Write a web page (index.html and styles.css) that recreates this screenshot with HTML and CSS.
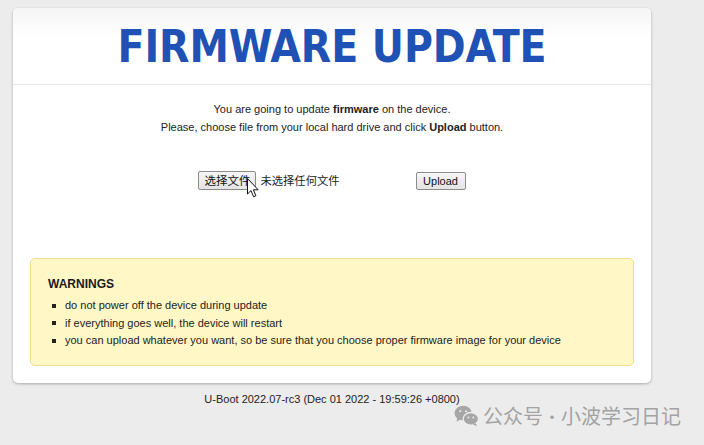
FILE: index.html
```html
<!DOCTYPE html>
<html lang="en">
<head>
<meta charset="utf-8">
<title>Firmware update</title>
<link rel="stylesheet" href="styles.css">
</head>
<body>
<div class="page">
  <div class="card">
    <div class="header">
      <h1 class="title">FIRMWARE UPDATE</h1>
    </div>
    <div class="content">
      <p class="intro">You are going to update <strong>firmware</strong> on the device.<br>Please, choose file from your local hard drive and click <strong>Upload</strong> button.</p>
      <form class="upload-form">
        <span class="file-input">
          <button type="button" class="btn btn-file">选择文件</button>
          <span class="file-name">未选择任何文件</span>
        </span>
        <button type="button" class="btn btn-upload">Upload</button>
      </form>
      <div class="warnings">
        <h2 class="warnings-title">WARNINGS</h2>
        <ul class="warnings-list">
          <li>do not power off the device during update</li>
          <li>if everything goes well, the device will restart</li>
          <li>you can upload whatever you want, so be sure that you choose proper firmware image for your device</li>
        </ul>
      </div>
    </div>
  </div>
  <div class="footer">U-Boot 2022.07-rc3 (Dec 01 2022 - 19:59:26 +0800)</div>
</div>

<svg class="cursor" width="12" height="20" viewBox="0 0 12 20" aria-hidden="true">
  <path d="M0.5 0.5 L0.5 16 L4 12.6 L6.6 18.8 L8.9 17.8 L6.4 11.8 L11.2 11.8 Z" fill="#fff" stroke="#111" stroke-width="1" stroke-linejoin="round"/>
</svg>

<div class="watermark">
  <svg class="wm-icon" width="25" height="22" viewBox="0 0 26 22" aria-hidden="true">
    <ellipse cx="9.5" cy="8" rx="9" ry="7.6" fill="#a6a6a6"/>
    <path d="M3.5 13 L2.6 17 L7 14.5 Z" fill="#a6a6a6"/>
    <ellipse cx="17.5" cy="14" rx="8" ry="6.6" fill="#a6a6a6" stroke="#ededed" stroke-width="1.4"/>
    <path d="M22.5 18.5 L24 21.5 L19.5 19.8 Z" fill="#a6a6a6"/>
    <circle cx="6.5" cy="6" r="1.1" fill="#ededed"/>
    <circle cx="12.5" cy="6" r="1.1" fill="#ededed"/>
    <circle cx="15" cy="12.5" r="1" fill="#ededed"/>
    <circle cx="20" cy="12.5" r="1" fill="#ededed"/>
  </svg>
  <span class="wm-text">公众号</span><span class="wm-text wm-dot">·</span><span class="wm-text">小波学习日记</span>
</div>
</body>
</html>
```

FILE: styles.css
```css
html, body {
  margin: 0;
  padding: 0;
}

body {
  background: #ececec;
  font-family: "Liberation Sans", Arial, "Noto Sans CJK SC", sans-serif;
  font-size: 11px;
  color: #222;
  width: 704px;
  height: 445px;
  overflow: hidden;
  position: relative;
}

.page {
  padding: 8px 0 0 13px;
  width: 638px;
}

.card {
  background: #fff;
  border-radius: 5px;
  box-shadow: 0 1px 3px rgba(0, 0, 0, 0.28);
  padding-bottom: 17px;
}

.header {
  padding: 13px 0 12px;
  text-align: center;
  border-bottom: 1px solid #e8e8e8;
  border-radius: 5px 5px 0 0;
  background: linear-gradient(#f5f5f5, #fff 40%);
}

.title {
  margin: 0;
  font-family: "DejaVu Sans Condensed", "DejaVu Sans", sans-serif;
  font-stretch: condensed;
  font-weight: bold;
  font-size: 44px;
  line-height: 51px;
  letter-spacing: -0.1px;
  color: #1f52b4;
}

.content {
  padding: 15px 17px 0;
}

.intro {
  margin: 0;
  text-align: center;
  line-height: 18px;
}

.intro strong {
  font-weight: bold;
}

.upload-form {
  display: flex;
  justify-content: center;
  align-items: center;
  gap: 76px;
  margin-top: 35px;
  height: 19px;
}

.file-input {
  display: flex;
  align-items: center;
  gap: 4px;
}

.btn {
  font-family: "Liberation Sans", Arial, "Noto Sans CJK SC", sans-serif;
  color: #111;
  background: linear-gradient(#f6f6f6, #e4e4e4);
  border: 1px solid #8c8c8c;
  border-radius: 2px;
  padding: 0;
  margin: 0;
}

.btn-file {
  width: 58px;
  height: 19px;
  font-family: "Noto Sans CJK SC", sans-serif;
  font-size: 11.5px;
  line-height: 17px;
}

.file-name {
  font-family: "Noto Sans CJK SC", sans-serif;
  font-size: 11.3px;
  line-height: 19px;
  color: #222;
}

.btn-upload {
  width: 50px;
  height: 18px;
  font-size: 11px;
  line-height: 16px;
}

.warnings {
  margin-top: 68px;
  height: 108px;
  box-sizing: border-box;
  background: #fff8c6;
  border: 1px solid #f1df8a;
  border-radius: 5px;
  padding: 17px 17px 0;
}

.warnings-title {
  margin: 0;
  font-size: 12px;
  line-height: 16px;
  font-weight: bold;
  color: #1a1a1a;
}

.warnings-list {
  margin: 5px 0 0;
  padding: 0 0 0 4px;
  list-style: none;
  line-height: 17.5px;
}

.warnings-list li {
  display: flex;
  align-items: center;
}

.warnings-list li::before {
  content: "";
  flex: none;
  width: 4px;
  height: 4px;
  background: #222;
  margin-right: 9px;
}

.footer {
  text-align: center;
  line-height: 18px;
  padding-top: 7px;
}

.cursor {
  position: absolute;
  left: 247px;
  top: 178px;
}

.watermark {
  position: absolute;
  left: 454px;
  top: 403px;
  display: flex;
  align-items: center;
}

.wm-icon {
  margin-right: 4px;
}

.wm-text {
  font-family: "Noto Sans CJK SC", sans-serif;
  font-size: 20px;
  line-height: 26px;
  color: #a3a3a3;
}

.wm-dot {
  width: 18px;
  text-align: center;
  font-size: 16px;
}
```
